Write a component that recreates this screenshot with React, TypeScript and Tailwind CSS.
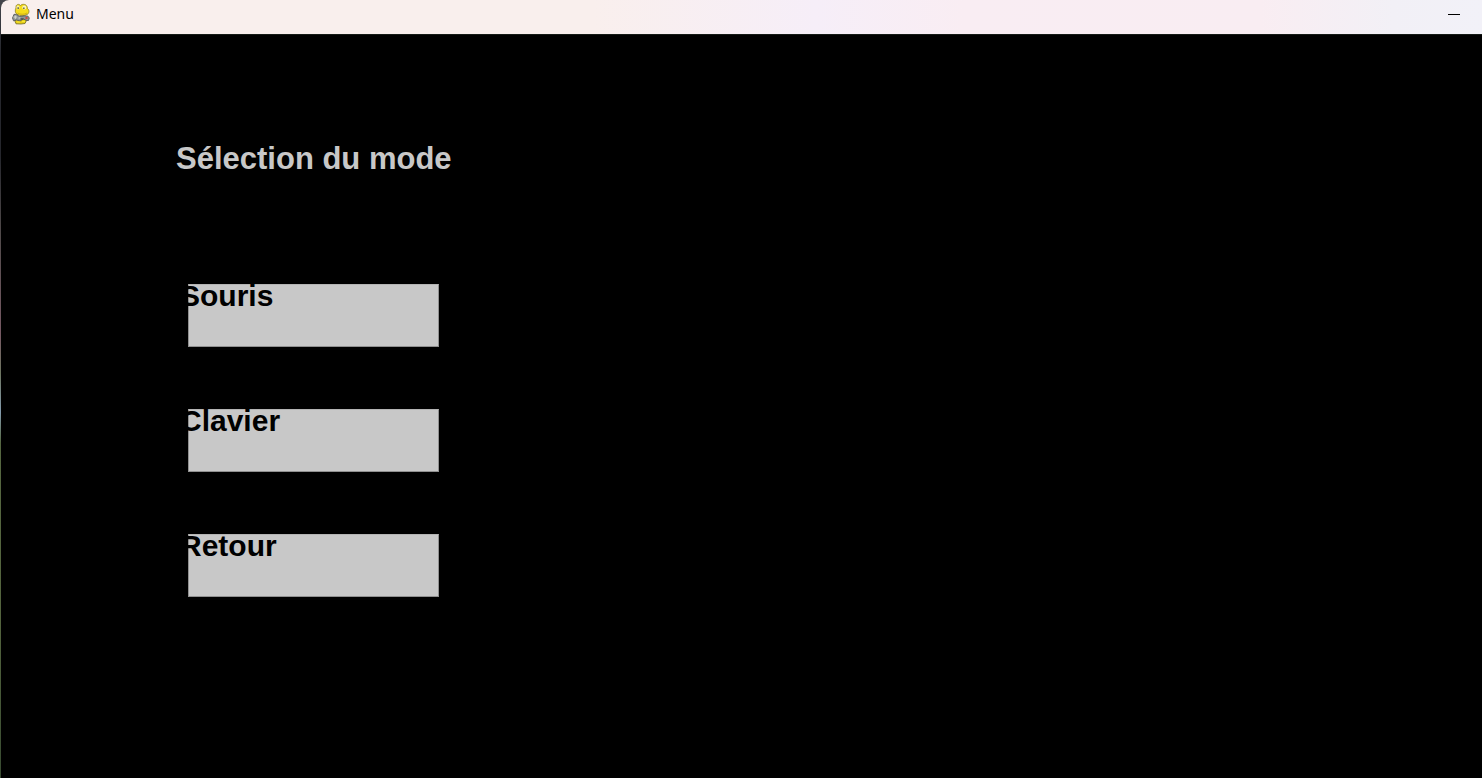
import React from "react";

function SnakeIcon() {
  return (
    <svg className="h-6 w-[22px] shrink-0" viewBox="0 0 22 24" aria-hidden="true">
      <path d="M5.500 17 L14 16.500 L16.500 18.500 L15 21.500 L11 22 L6 21.800 L5 19.500Z" fill="#e8cf16" stroke="#6f6726" strokeWidth=".8" />
      <path d="M6 4.500 C6.300 2 9.500 1.700 10.500 3.700 C11.500 1.800 16 1.700 17 4.500 L17.500 6.500 C19.500 8 19.300 11 17.500 12.300 C14.500 14.200 9.500 14.200 7 12.300 C4.800 10.800 5 7.500 6 6Z" fill="#f5dc1a" stroke="#8c7f24" strokeWidth=".8" />
      <ellipse cx="8" cy="5.500" rx="1.500" ry="2" fill="#f6efae" />
      <ellipse cx="14.300" cy="5.500" rx="2" ry="2.100" fill="#f8f3c4" />
      <path d="M7.500 5.300h1.300v1.700H7.500z M13.200 5.500h1.300v1.500h-1.300z" fill="#55523a" />
      <path d="M7.500 11 C10 12.700 14.500 12.700 17 11" fill="none" stroke="#c5a316" strokeWidth=".8" />
      <path d="M4 12.300 L6.500 12.500 L9.500 14.500 L14.500 13.800 L18 14.200 L19.300 16 L18.500 18.500 L16.500 18.500 L13.500 17 L10 19 L6.500 18 L3.500 18.800 L2.500 16Z" fill="#8f9595" stroke="#4b5153" strokeWidth=".8" />
      <path d="M3.500 15h3.500M5.300 13.500v3.500M8.500 16h2" stroke="#dcdcd6" strokeWidth=".9" />
      <path d="M10.500 17h3" stroke="#464c50" strokeWidth="1.500" />
      <circle cx="16.500" cy="16" r="1.200" fill="#c94a4a" />
      <path d="M7 20h3M12 19.500h3" stroke="#f8e63a" />
    </svg>
  );
}

const choices = ["Souris", "Clavier", "Retour"];

export default function App() {
  return (
    <div className="flex min-h-screen bg-[linear-gradient(to_bottom,#44464c_0%,#25262c_7%,#25262c_20%,#504a4a_30%,#765963_43%,#6d7560_48%,#839aac_53%,#556640_57%,#53633d_80%,#384b31_100%)] pl-px">
      <div className="flex grow flex-col overflow-hidden rounded-tl-lg bg-black">
        <header className="flex h-[34px] items-start justify-between bg-[linear-gradient(to_right,#f9efed_0%,#f9efed_40%,#f6eef8_55%,#f9edf3_65%,#f9edf2_85%,#f2f0f6_94%,#f2f1f8_100%)] pt-0.5 pr-4">
          <div className="flex items-center gap-1 pl-[9px]">
            <SnakeIcon />
            <span className="font-['Noto_Sans',sans-serif] text-sm leading-6 text-black">Menu</span>
          </div>
          <button type="button" aria-label="Réduire" className="flex h-6 w-6 items-center justify-center">
            <span className="h-px w-3 bg-black" />
          </button>
        </header>
        <main className="grow border-t border-[#151a16] px-[175px] pt-[106px] font-['Liberation_Sans',Arial,sans-serif] font-bold">
          <h1 className="text-[31px] leading-9 text-[#c8c8c8]">Sélection du mode</h1>
          <nav className="mt-[107px] flex flex-col items-start gap-[62px] pl-3">
            {choices.map((label) => (
              <button
                key={label}
                type="button"
                className="flex h-[63px] w-[251px] items-start border border-[#909090] border-t-[#b4b4b4] bg-[#c8c8c8] text-[30px] leading-[22px] text-black"
              >
                <span className="-ml-[9px]">{label}</span>
              </button>
            ))}
          </nav>
        </main>
      </div>
    </div>
  );
}
